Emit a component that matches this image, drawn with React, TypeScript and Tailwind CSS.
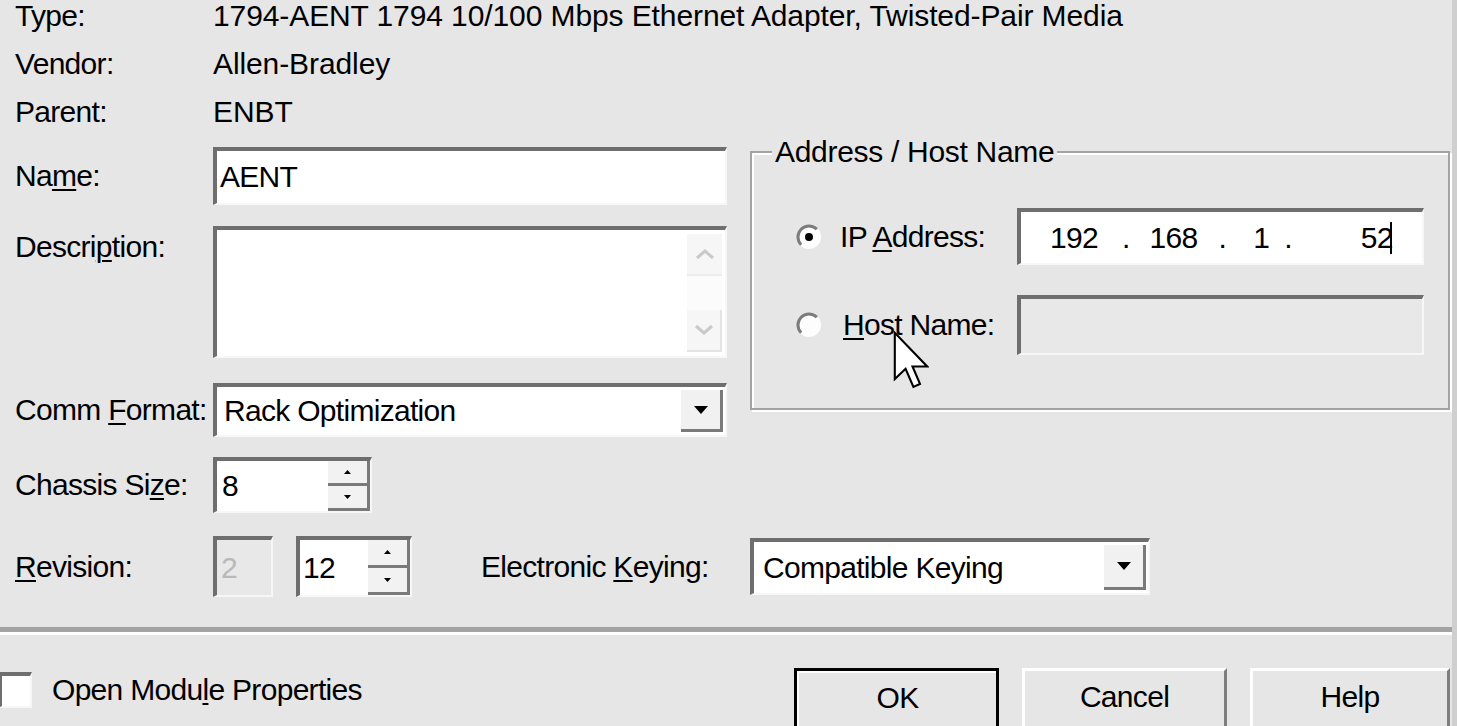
import React from "react";

const sunken =
  "border-t-4 border-l-4 border-r-2 border-b-2 border-t-[#6e6e6e] border-l-[#6e6e6e] border-r-[#f7f7f7] border-b-[#f7f7f7]";

const U = ({ children }: { children: React.ReactNode }) => (
  <span className="underline decoration-2 underline-offset-[3px]">{children}</span>
);

const InfoRow = ({ label, value }: { label: string; value: string }) => (
  <div className="flex h-[48px] items-center whitespace-nowrap">
    <div className="ml-[15px] w-[198px] shrink-0">{label}</div>
    <div className="tracking-[-0.1px]">{value}</div>
  </div>
);

const Row = ({
  label,
  className = "",
  children,
}: {
  label: React.ReactNode;
  className?: string;
  children: React.ReactNode;
}) => (
  <div className={`flex ${className}`}>
    <div className="ml-[15px] w-[198px] shrink-0 whitespace-nowrap">{label}</div>
    {children}
  </div>
);

const Tri = ({ up, w = 14, h = 8 }: { up?: boolean; w?: number; h?: number }) => (
  <svg width={w} height={h} viewBox="0 0 14 8">
    <path d={up ? "M0 8h14L7 0z" : "M0 0h14L7 8z"} fill="#000" />
  </svg>
);

const DropButton = () => (
  <div className="my-[3px] mr-[2px] flex w-[42px] items-center justify-center border-b-[3px] border-r-[3px] border-b-[#7a7a7a] border-r-[#7a7a7a] bg-[#f1f1f1]">
    <Tri />
  </div>
);

const Spin = () => (
  <div className="flex w-[42px] flex-col border-r-[3px] border-r-[#7a7a7a]">
    <div className="flex flex-1 items-center justify-center border-b-[3px] border-b-[#7a7a7a] bg-[#f2f2f2]">
      <Tri up w={7} h={4} />
    </div>
    <div className="flex flex-1 items-center justify-center border-b-[3px] border-b-[#7a7a7a] bg-[#f2f2f2]">
      <Tri w={7} h={4} />
    </div>
  </div>
);

const Chevron = ({ up }: { up?: boolean }) => (
  <svg width="20" height="12" viewBox="0 0 20 12">
    <path
      d={up ? "M2 10 L10 3 L18 10" : "M2 2 L10 9 L18 2"}
      stroke="#c9c9c9"
      strokeWidth="3"
      fill="none"
    />
  </svg>
);

const Radio = ({ on }: { on?: boolean }) => (
  <svg width="26" height="26" viewBox="0 0 26 26">
    <circle cx="13" cy="13" r="12" fill="#fdfdfd" />
    <path d="M5.2 20.8 A11 11 0 0 1 20.8 5.2" stroke="#7c7c7c" strokeWidth="3" fill="none" />
    {on && <circle cx="13" cy="13" r="4" fill="#000" />}
  </svg>
);

const App = () => {
  return (
    <div className="relative h-[726px] w-[1457px] overflow-hidden border-r-[5px] border-r-[#cfcfcf] bg-[#e6e6e6] font-['Liberation_Sans',Arial,sans-serif] text-[30px] leading-[34px] tracking-[-0.7px] text-black">
      <div className="flex items-start">
        {/* left column */}
        <div className="w-[727px] shrink-0">
          <div className="-mt-[8px]">
            <InfoRow label="Type:" value="1794-AENT 1794 10/100 Mbps Ethernet Adapter, Twisted-Pair Media" />
            <InfoRow label="Vendor:" value="Allen-Bradley" />
            <InfoRow label="Parent:" value="ENBT" />
          </div>

          <Row label={<>Na<U>m</U>e:</>} className="mt-[11px] h-[58px] items-center">
            <div className={`${sunken} flex h-[58px] flex-1 items-center bg-white pl-[3px]`}>AENT</div>
          </Row>

          <Row label={<>Descri<U>p</U>tion:</>} className="mt-[21px] items-start [&>div:first-child]:pt-[4px]">
            <div className={`${sunken} flex h-[132px] flex-1 justify-end bg-white`}>
              <div className="flex w-[38px] flex-col py-[4px] pr-[3px]">
                <div className="flex h-[42px] items-center justify-center border-b-2 border-b-[#ececec] bg-[#f6f6f6]">
                  <Chevron up />
                </div>
                <div className="flex-1 bg-[#fbfbfb]" />
                <div className="flex h-[42px] items-center justify-center border-b-2 border-r-2 border-[#e4e4e4] bg-[#f6f6f6]">
                  <Chevron />
                </div>
              </div>
            </div>
          </Row>

          <Row label={<>Comm <U>F</U>ormat:</>} className="mt-[25px] h-[54px] items-center">
            <div className={`${sunken} flex h-[54px] flex-1 bg-white`}>
              <div className="flex flex-1 items-center pl-[7px]">Rack Optimization</div>
              <DropButton />
            </div>
          </Row>

          <Row label={<>Chassis Si<U>z</U>e:</>} className="mt-[20px] h-[56px] items-center">
            <div className={`${sunken} flex h-[56px] w-[159px] bg-white`}>
              <div className="flex flex-1 items-center pl-[5px]">8</div>
              <Spin />
            </div>
          </Row>
        </div>

        {/* address group */}
        <fieldset className="ml-[23px] mt-[135px] h-[275px] w-[700px] border-2 border-[#a3a3a3] shadow-[inset_2px_2px_0_#ffffff,2px_2px_0_#ffffff]">
          <legend className="ml-[20px] bg-[#e6e6e6] px-[3px] tracking-[-0.3px]">Address / Host Name</legend>
          <div className="mt-[39px] flex h-[57px] items-center">
            <div className="ml-[44px] flex w-[44px] shrink-0">
              <Radio on />
            </div>
            <div className="w-[177px] shrink-0 whitespace-nowrap">
              IP <U>A</U>ddress:
            </div>
            <div className={`${sunken} flex h-[57px] w-[407px] items-center bg-white`}>
              <span className="ml-[29px]">192</span>
              <span className="ml-[24px]">.</span>
              <span className="ml-[20px]">168</span>
              <span className="ml-[21px]">.</span>
              <span className="ml-[27px]">1</span>
              <span className="ml-[15px]">.</span>
              <span className="ml-[69px]">52</span>
              <span className="-ml-[3px] h-[32px] w-[2px] bg-black" />
            </div>
          </div>
          <div className="mt-[30px] flex h-[60px] items-center">
            <div className="ml-[44px] flex w-[47px] shrink-0">
              <Radio />
            </div>
            <div className="w-[174px] shrink-0 whitespace-nowrap">
              <U>H</U>ost Name:
            </div>
            <div className={`${sunken} h-[60px] w-[407px] bg-[#e8e8e8]`} />
          </div>
        </fieldset>
      </div>

      {/* revision row */}
      <Row label={<><U>R</U>evision:</>} className="mt-[23px] h-[61px] items-center">
        <div className={`${sunken} flex h-[61px] w-[60px] items-center bg-[#e8e8e8] pl-[4px] text-[#b9b9b9]`}>2</div>
        <div className={`${sunken} ml-[23px] flex h-[61px] w-[116px] bg-white`}>
          <div className="flex flex-1 items-center pl-[3px]">12</div>
          <Spin />
        </div>
        <div className="ml-[69px] w-[269px] shrink-0 whitespace-nowrap">
          Electronic <U>K</U>eying:
        </div>
        <div className={`${sunken} flex h-[57px] w-[400px] bg-white`}>
          <div className="flex flex-1 items-center pl-[9px]">Compatible Keying</div>
          <DropButton />
        </div>
      </Row>

      {/* separator */}
      <div className="mt-[30px] h-[8px] border-b-[3px] border-t-[5px] border-b-white border-t-[#a3a3a3]" />

      {/* bottom row */}
      <div className="mt-[33px] flex items-start">
        <div className="-ml-[2px] mt-[4px] flex items-center">
          <div className={`${sunken} h-[36px] w-[34px] bg-white`} />
          <div className="ml-[20px] whitespace-nowrap">
            Open Modu<U>l</U>e Properties
          </div>
        </div>
        <div className="ml-auto mr-[2px] flex gap-[23px]">
          <div className="h-[64px] w-[205px] border-[3px] border-black">
            <div className="flex h-full items-center justify-center border-l-2 border-t-2 border-l-white border-t-white pb-[6px]">
              OK
            </div>
          </div>
          <div className="flex h-[64px] w-[205px] items-center justify-center border-[3px] border-b-[#7e7e7e] border-l-white border-r-[#7e7e7e] border-t-white pb-[6px]">
            Cancel
          </div>
          <div className="flex h-[64px] w-[200px] items-center justify-center border-[3px] border-b-[#7e7e7e] border-l-white border-r-[#7e7e7e] border-t-white pb-[6px]">
            Help
          </div>
        </div>
      </div>

      {/* mouse pointer */}
      <svg className="absolute left-[893px] top-[331px]" width="36" height="58" viewBox="0 0 12 19.3">
        <path
          d="M0.6 0.6 V16 L4.2 12.6 L6.8 18.6 L9 17.6 L6.5 11.8 H11.4 Z"
          fill="#fff"
          stroke="#000"
          strokeWidth="0.7"
        />
      </svg>
    </div>
  );
};

export default App;
